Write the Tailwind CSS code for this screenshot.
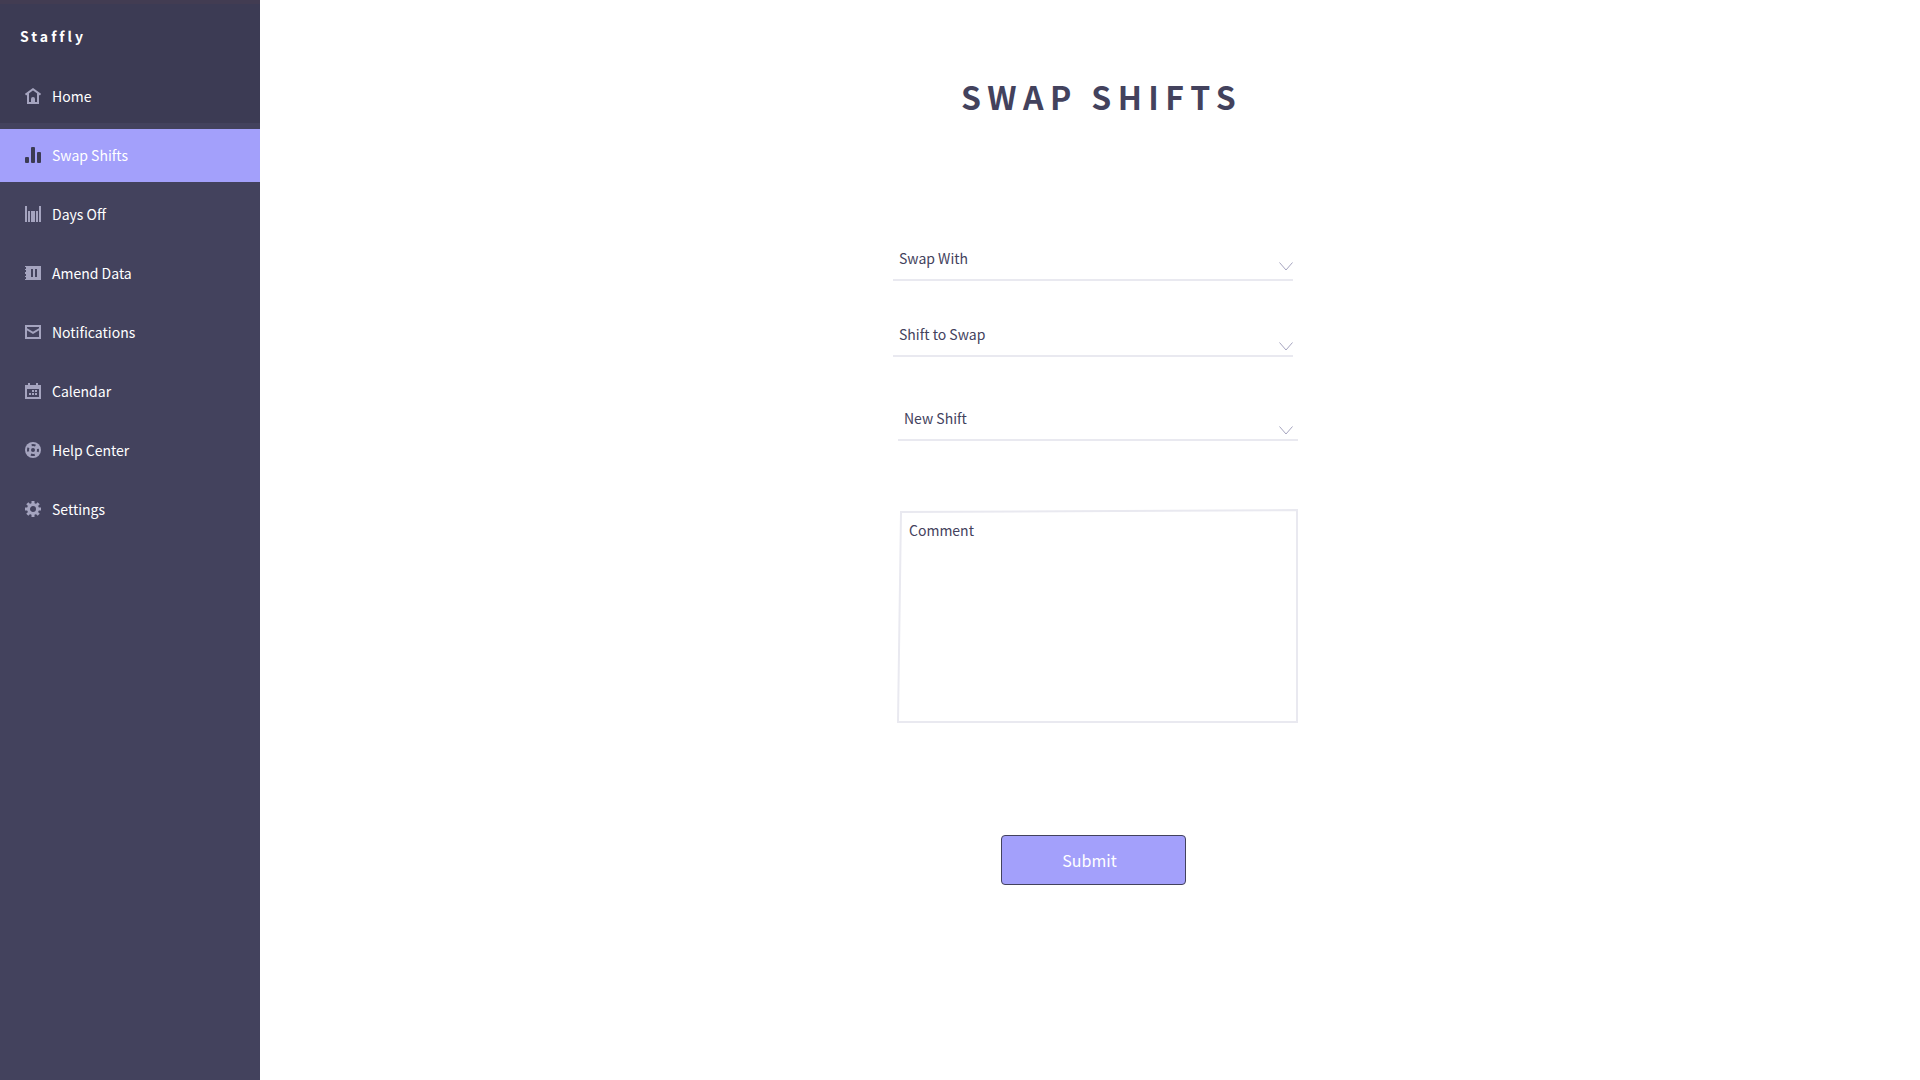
<!DOCTYPE html>
<html lang="en">
<head>
<meta charset="utf-8">
<meta name="viewport" content="width=device-width, initial-scale=1">
<title>Staffly – Swap Shifts</title>
<script src="https://cdn.jsdelivr.net/npm/@tailwindcss/browser@4"></script>
</head>
<body class="flex min-h-screen bg-white font-['Noto_Sans_CJK_SC',sans-serif] text-sm text-[#43425d]">
  <aside class="w-[260px] shrink-0 bg-[#43425d] text-white">
    <div class="flex h-[70px] items-center border-t-4 border-[#423c52] bg-[#3c3b54] px-5 pb-[3px] text-sm font-bold tracking-[3px]">Staffly</div>
    <nav class="flex flex-col gap-[6px]">
      <a href="#" class="flex h-[53px] items-center gap-[11px] bg-[#3c3b54] px-[25px] pb-[2px]">
        <svg class="size-4 text-[#a5a4bf]" viewBox="0 0 16 16" fill="none" stroke="currentColor" stroke-width="2"><path d="M.5 6.600 8 1.200l7.500 5.400M3 5v10h10V5"/><path d="M6 15v-4a2 2 0 0 1 4 0v4z" fill="currentColor" stroke="none"/></svg>
        Home
      </a>
      <a href="#" aria-current="page" class="flex h-[53px] items-center gap-[11px] bg-[#a3a0fb] px-[25px] pb-[2px]">
        <svg class="size-4 text-[#3c3b54]" viewBox="0 0 16 16" fill="currentColor"><rect y="10" width="4" height="6" rx="1"/><rect x="6" width="4" height="16" rx="1"/><rect x="12" y="5" width="4" height="11" rx="1"/></svg>
        Swap Shifts
      </a>
      <a href="#" class="flex h-[53px] items-center gap-[11px] px-[25px] pb-[2px]">
        <svg class="size-4 text-[#a5a4bf]" viewBox="0 0 16 16" fill="currentColor"><path d="M0 0h2v16H0zM3 5h2v11H3zM6 5h4v11H6zM11 5h2v11h-2zM14 0h2v16h-2z"/></svg>
        Days Off
      </a>
      <a href="#" class="flex h-[53px] items-center gap-[11px] px-[25px] pb-[2px]">
        <svg class="size-4 text-[#a5a4bf]" viewBox="0 0 16 16" fill="currentColor"><path fill-rule="evenodd" d="M0 1h16v14H0v-1h1v-2H0v-1h1V9H0V7h1V5H0V4h1V2H0zM6 4v8h2V4zM10 4v8h2V4z"/></svg>
        Amend Data
      </a>
      <a href="#" class="flex h-[53px] items-center gap-[11px] px-[25px] pb-[2px]">
        <svg class="size-4 text-[#a5a4bf]" viewBox="0 0 16 16" fill="none" stroke="currentColor" stroke-width="2"><path d="M1 2h14v12H1z"/><path d="m1.500 5 6.500 3.800L14.500 5"/></svg>
        Notifications
      </a>
      <a href="#" class="flex h-[53px] items-center gap-[11px] px-[25px] pb-[2px]">
        <svg class="size-4 text-[#a5a4bf]" viewBox="0 0 16 16" fill="currentColor"><path fill-rule="evenodd" d="M3 0h2v2h6V0h2v2h3v14H0V2h3zM2 6v8h12V6z"/><path d="M7 7h2v2H7zM10 7h2v2h-2zM4 10h2v2H4zM7 10h2v2H7zM10 10h2v2h-2z"/></svg>
        Calendar
      </a>
      <a href="#" class="flex h-[53px] items-center gap-[11px] px-[25px] pb-[2px]">
        <svg class="size-4 text-[#a5a4bf]" viewBox="0 0 16 16"><circle cx="8" cy="8" r="8" fill="currentColor"/><circle cx="8" cy="8" r="2" fill="#43425d"/><circle cx="8" cy="8" r="5" fill="none" stroke="#43425d" stroke-width="2" stroke-dasharray="4 3.854" stroke-dashoffset="2"/></svg>
        Help Center
      </a>
      <a href="#" class="flex h-[53px] items-center gap-[11px] px-[25px] pb-[2px]">
        <svg class="size-4 text-[#a5a4bf]" viewBox="0 0 16 16" fill="none" stroke="currentColor"><circle cx="8" cy="8" r="4.500" stroke-width="3"/><path stroke-width="3" d="M8 0v3M8 13v3M0 8h3M13 8h3M2.300 2.300l2 2M11.700 11.700l2 2M2.300 13.700l2-2M11.700 4.300l2-2"/></svg>
        Settings
      </a>
    </nav>
  </aside>

  <main class="flex min-w-0 flex-1 flex-col items-center pt-[72px] pl-[11px]">
    <h1 class="pl-[12px] text-[32px] leading-[48px] font-bold tracking-[0.2em]">SWAP SHIFTS</h1>
    <form class="mt-[121px] flex w-full max-w-[405px] flex-col">
      <div class="relative mr-[5px]">
        <select aria-label="Swap With" class="block h-10 w-full appearance-none border-b-2 border-[#e9e9f0] pb-1 pl-[6px]"><option>Swap With</option></select>
        <svg class="pointer-events-none absolute right-0 bottom-[10px] h-[9px] w-[14px]" viewBox="0 0 14 9" fill="none" stroke="#a5a4bf"><path d="m.5.5 6.500 7.500 6.500-7.500"/></svg>
      </div>
      <div class="relative mt-9 mr-[5px]">
        <select aria-label="Shift to Swap" class="block h-10 w-full appearance-none border-b-2 border-[#e9e9f0] pb-1 pl-[6px]"><option>Shift to Swap</option></select>
        <svg class="pointer-events-none absolute right-0 bottom-[6px] h-[9px] w-[14px]" viewBox="0 0 14 9" fill="none" stroke="#a5a4bf"><path d="m.5.5 6.500 7.500 6.500-7.500"/></svg>
      </div>
      <div class="relative mt-11 ml-[5px]">
        <select aria-label="New Shift" class="block h-10 w-full appearance-none border-b-2 border-[#e9e9f0] pb-1 pl-[6px]"><option>New Shift</option></select>
        <svg class="pointer-events-none absolute right-[5px] bottom-[6px] h-[9px] w-[14px]" viewBox="0 0 14 9" fill="none" stroke="#a5a4bf"><path d="m.5.5 6.500 7.500 6.500-7.500"/></svg>
      </div>
      <div class="relative mt-[68px] ml-1">
        <!-- Slightly skewed outline of the comment box -->
        <svg class="absolute inset-0 size-full" viewBox="0 0 401 214" preserveAspectRatio="none" fill="none" stroke="#e9e9f0" stroke-width="2"><path d="M4 3 400 1v212H1z"/></svg>
        <textarea aria-label="Comment" placeholder="Comment" class="relative block h-[214px] w-full resize-none px-3 py-[11px] leading-5 placeholder:text-[#43425d]"></textarea>
      </div>
      <button type="submit" class="mt-28 mr-1 h-[50px] w-[185px] self-center rounded-sm border border-[#43425d] bg-[#a3a0fb] pr-2 text-base text-white">Submit</button>
    </form>
  </main>
</body>
</html>
